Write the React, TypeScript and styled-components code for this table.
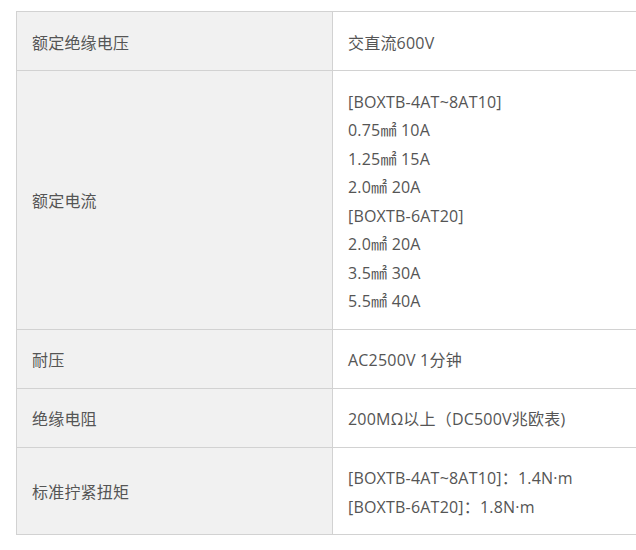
import React from "react";
import styled, { createGlobalStyle } from "styled-components";

const Global = createGlobalStyle`
  html, body { margin: 0; padding: 0; background: #fff; }
  body { overflow: hidden; }
`;

const Wrap = styled.div`
  padding: 11px 0 0 16px;
  overflow: hidden;
  width: 636px;
  box-sizing: border-box;
`;

const Table = styled.table`
  border-collapse: collapse;
  width: 660px;
  table-layout: fixed;
  font-family: "Open Sans", "Noto Sans CJK SC", sans-serif;
  font-size: 16px;
  line-height: 28.5px;
  letter-spacing: 0.2px;
  color: #555;
`;

const Label = styled.th`
  width: 285px;
  background: #f1f1f1;
  border: 1px solid #d2d2d2;
  padding: 16.5px 15px 13px;
  text-align: left;
  font-weight: normal;
  vertical-align: middle;
`;

const Value = styled.td`
  border: 1px solid #d2d2d2;
  padding: 16.5px 15px 13px;
  vertical-align: middle;
`;

const Line = styled.div`
  white-space: nowrap;
`;

const rows: [string, string[]][] = [
  ["额定绝缘电压", ["交直流600V"]],
  [
    "额定电流",
    [
      "[BOXTB-4AT~8AT10]",
      "0.75㎟ 10A",
      "1.25㎟ 15A",
      "2.0㎟ 20A",
      "[BOXTB-6AT20]",
      "2.0㎟ 20A",
      "3.5㎟ 30A",
      "5.5㎟ 40A",
    ],
  ],
  ["耐压", ["AC2500V 1分钟"]],
  ["绝缘电阻", ["200MΩ以上（DC500V兆欧表)"]],
  ["标准拧紧扭矩", ["[BOXTB-4AT~8AT10]：1.4N·m", "[BOXTB-6AT20]：1.8N·m"]],
];

export default function App() {
  return (
    <>
      <Global />
      <Wrap>
        <Table>
          <tbody>
            {rows.map(([k, vs]) => (
              <tr key={k}>
                <Label>{k}</Label>
                <Value>
                  {vs.map((v, i) => (
                    <Line key={i}>{v}</Line>
                  ))}
                </Value>
              </tr>
            ))}
          </tbody>
        </Table>
      </Wrap>
    </>
  );
}
